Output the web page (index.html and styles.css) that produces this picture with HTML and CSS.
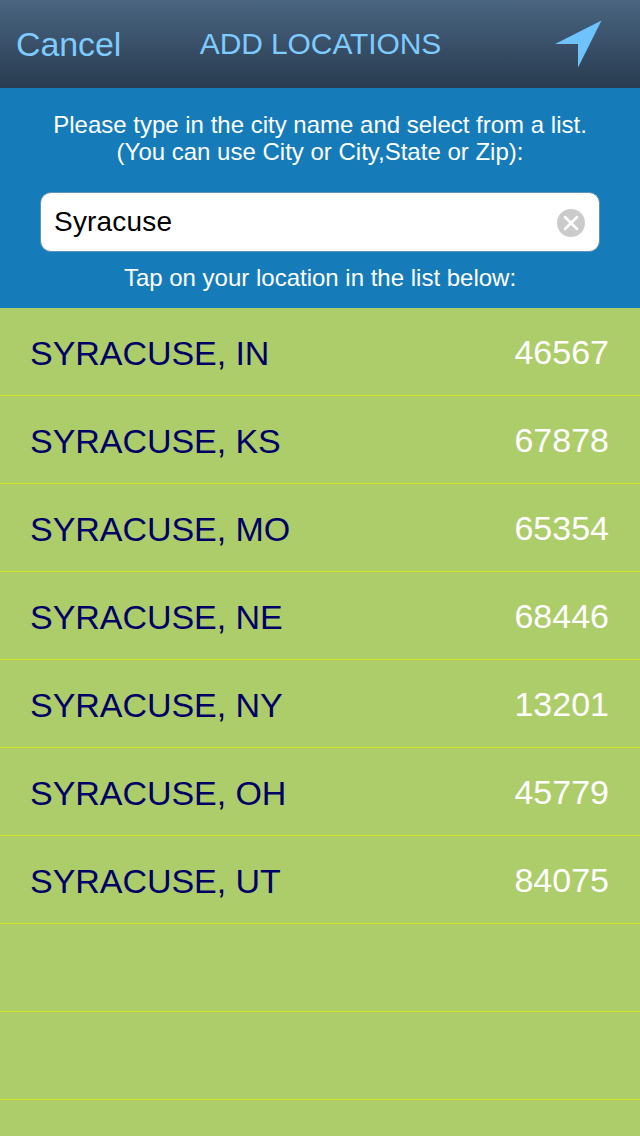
FILE: index.html
```html
<!DOCTYPE html>
<html lang="en">

<head>
	<meta charset="utf-8">
	<title>Add Locations</title>
	<link rel="stylesheet" href="styles.css">
</head>

<body>
	<div id="cabecera">
		<a class="cancel">Cancel</a>
		<h1>ADD LOCATIONS</h1>
		<svg class="locate" width="48" height="48" viewBox="0 0 48 48">
			<path d="M47.5 0.5L1 24H24V47.5Z" fill="#6fc3fc"/>
		</svg>
	</div>
	<div id="search">
		<p class="help">Please type in the city name and select from a list.<br>(You can use City or City,State or Zip):</p>
		<div class="field">
			<span>Syracuse</span>
			<svg width="28" height="28" viewBox="0 0 28 28">
				<circle cx="14" cy="14" r="14" fill="#cbcbcb"/>
				<path d="M8 8L20 20M20 8L8 20" stroke="#fff" stroke-width="2.5" stroke-linecap="round"/>
			</svg>
		</div>
		<p class="hint">Tap on your location in the list below:</p>
	</div>
	<ul id="results">
		<li><span class="city">SYRACUSE, IN</span><span class="zip">46567</span></li>
		<li><span class="city">SYRACUSE, KS</span><span class="zip">67878</span></li>
		<li><span class="city">SYRACUSE, MO</span><span class="zip">65354</span></li>
		<li><span class="city">SYRACUSE, NE</span><span class="zip">68446</span></li>
		<li><span class="city">SYRACUSE, NY</span><span class="zip">13201</span></li>
		<li><span class="city">SYRACUSE, OH</span><span class="zip">45779</span></li>
		<li><span class="city">SYRACUSE, UT</span><span class="zip">84075</span></li>
		<li></li>
		<li></li>
		<li></li>
	</ul>
</body>

</html>
```
FILE: styles.css
```css
* {
	box-sizing: border-box;
}

body {
	margin: 0;
	height: 1136px;
	overflow: hidden;
	background-color: #adcd6a;
	font-family: "Liberation Sans", Arial, sans-serif;
}

#cabecera {
	display: grid;
	grid-template-columns: 160px 1fr 160px;
	align-items: center;
	height: 88px;
	background: linear-gradient(#4a6581, #283b4f);
	color: #7dcbff;
}

.cancel {
	padding-left: 16px;
	font-size: 34px;
	line-height: 40px;
	letter-spacing: -0.1px;
}

#cabecera h1 {
	margin: 0;
	padding-left: 1px;
	text-align: center;
	font-size: 30px;
	font-weight: normal;
	letter-spacing: -0.1px;
	white-space: nowrap;
}

.locate {
	justify-self: end;
	margin-right: 38px;
}

#search {
	height: 220px;
	padding: 23px 40px 0;
	background-color: #167cb9;
	color: white;
	text-align: center;
	font-size: 24px;
	line-height: 27px;
}

#search p {
	margin: 0;
}

.field {
	display: flex;
	align-items: center;
	justify-content: space-between;
	height: 60px;
	margin-top: 27px;
	padding: 0 14px 0 13px;
	border: 1px solid #5f93b5;
	border-radius: 11px;
	background-color: white;
	color: black;
	font-size: 28px;
}

.field span {
	padding-bottom: 2px;
	letter-spacing: 0.2px;
}

.field svg {
	margin-top: 2px;
}

#search .hint {
	margin-top: 12px;
}

#results {
	margin: 0;
	padding: 0;
	list-style: none;
}

#results li {
	display: flex;
	justify-content: space-between;
	align-items: center;
	height: 88px;
	padding: 2px 31px 0 30px;
	border-bottom: 1px solid #d0e22a;
	font-size: 34px;
}

.city {
	padding-top: 2px;
	color: #000066;
	letter-spacing: -0.05px;
}

.zip {
	color: white;
}
```
